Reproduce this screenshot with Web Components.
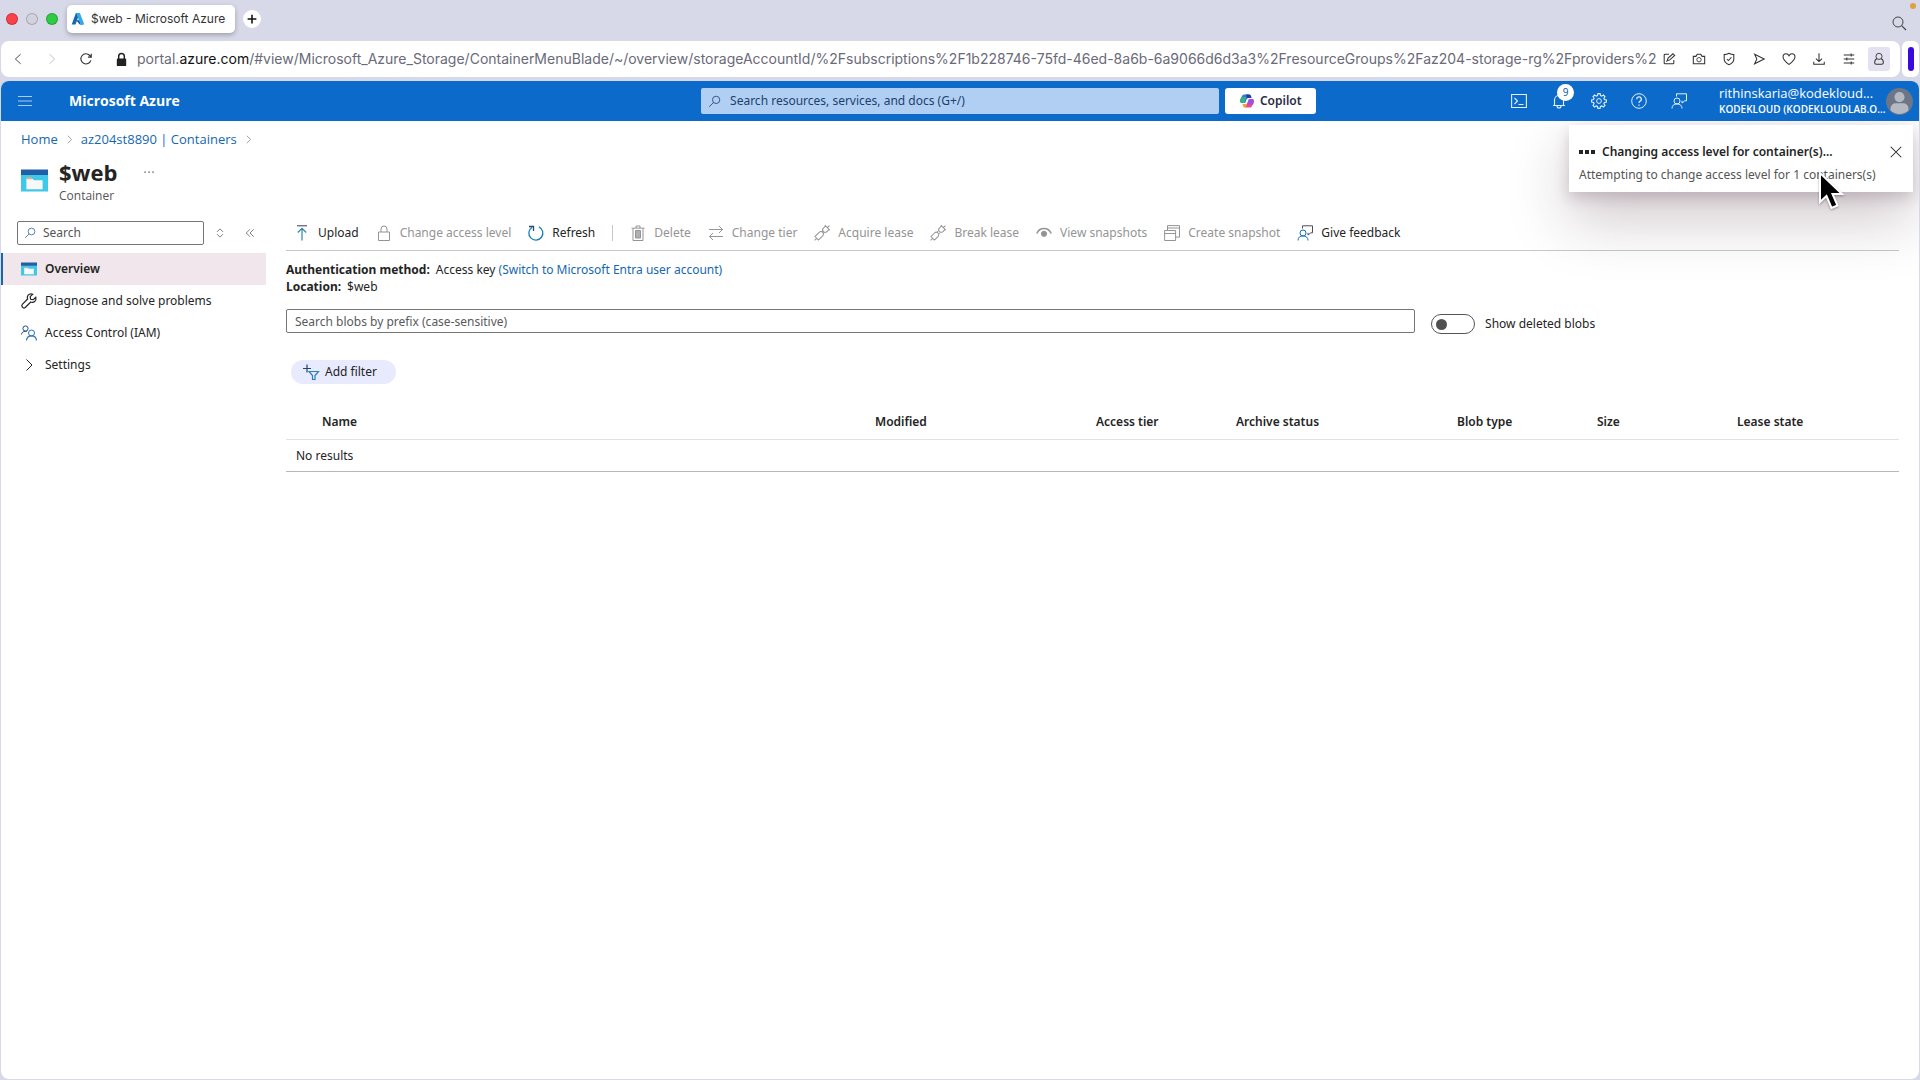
<!DOCTYPE html>
<html lang="en">
<head>
<meta charset="utf-8">
<title>$web - Microsoft Azure</title>
<style>
html, body { height: 100%; }
body { margin: 0; background: #d8d9e8; color: #242424; font: 12px/16px "Noto Sans", "Open Sans", sans-serif; overflow: hidden; }
</style>
</head>
<body>
<browser-window>
  <tab-strip slot="tabs">$web - Microsoft Azure</tab-strip>
  <address-bar slot="address"></address-bar>
  <azure-header></azure-header>
  <container-blade></container-blade>
  <toast-message heading="Changing access level for container(s)...">Attempting to change access level for 1 containers(s)</toast-message>
</browser-window>
<mouse-pointer></mouse-pointer>

<script>
const define = (name, html, setup) => {
  const template = document.createElement('template');
  template.innerHTML = html;
  customElements.define(name, class extends HTMLElement {
    constructor() {
      super();
      this.attachShadow({ mode: 'open' }).append(template.content.cloneNode(true));
    }
    connectedCallback() { if (setup) setup(this, this.shadowRoot); }
  });
};

const reset = `
  :host, *, *::before { box-sizing: border-box; }
  button, input { font: inherit; color: inherit; margin: 0; padding: 0; border: 0; background: none; }
  button { display: inline-flex; align-items: center; justify-content: center; }
  a { color: #1567b0; text-decoration: none; }
`;

const person = (c) => `<g stroke="${c}"><circle cx="6" cy="8" r="3"/><path d="M1 15.500c0-3 2-4.600 5-4.600s5 1.600 5 4.600"/></g>`;
const plug = (gap) => `
  <g transform="rotate(45 8 8)">
    <path d="M8 -2.500v3M5.500 .5h5v3a2.500 2.500 0 0 1-5 0zM4.500 .5h7M8 18.500v-3M5.500 ${9 + gap}.500a2.500 2.500 0 0 1 5 0V15.500h-5zM6.800 ${6 + gap}v1.500M9.200 ${6 + gap}v1.500"/>
  </g>`;
const icons = {
  azure: `<g stroke="none"><path fill="#1267b0" d="M5.600 1h4.200L5.200 14.200H.8z"/><path fill="#0a4a8c" d="M6 9.500h6.300l1.500 4.700H10z"/><path fill="#36a9e8" d="M5.900 1h4.300l5 13.200h-4.500z"/></g>`,
  plus: `<path stroke-width="1.800" d="M8 3v10M3 8h10"/>`,
  back: `<path d="M11 2.500L5 8l6 5.500"/>`,
  forward: `<path d="M5 2.500L11 8l-6 5.500"/>`,
  reload: `<path stroke-width="1.300" d="M13.500 9.500A5.800 5.800 0 1 1 12.300 4L14 5.800M14 2v3.800h-3.800"/>`,
  padlock: `<rect x="3" y="7" width="10" height="8" rx="1" fill="currentColor" stroke="none"/><path stroke-width="1.600" d="M5 7.500V4.500a3 3 0 0 1 6 0v3"/>`,
  edit: `<path stroke-width="1.200" d="M8 2.500H3.500a1 1 0 0 0-1 1v9a1 1 0 0 0 1 1h9a1 1 0 0 0 1-1V9M6 10l1-3 5.500-5 2 2L9 9zM5 11l2-2"/>`,
  camera: `<path stroke-width="1.200" d="M1.500 5h3L6 2.500h4L11.500 5h3v8.500h-13z"/><circle cx="8" cy="8.800" r="2.500"/>`,
  shield: `<path stroke-width="1.200" d="M8 1.500c2 1.300 3.800 1.500 5.500 1.500v5c0 3.500-3 5.500-5.500 6.500-2.500-1-5.500-3-5.500-6.500V3C4.200 3 6 2.800 8 1.500zM5.500 8l1.800 1.800L10.800 6"/>`,
  send: `<path stroke-width="1.200" d="M3 2.500L14 8 3 13.500 5.500 8z"/>`,
  heart: `<path stroke-width="1.200" d="M8 14.200C4.500 11.500 1.200 9 1.200 5.600 1.200 3.300 2.800 2 4.600 2 6.200 2 7.400 3 8 4.300 8.600 3 9.800 2 11.400 2c1.800 0 3.400 1.300 3.400 3.600 0 3.400-3.300 5.900-6.800 8.600z"/>`,
  download: `<path stroke-width="1.200" d="M8 1.500v9M4.500 7.500L8 11l3.500-3.500M2 11v3h12v-3"/>`,
  sliders: `<path stroke-width="1.200" d="M2 3.500h12M2 8h12M2 12.500h12M10.500 1.800v3.400M5.500 6.300v3.400M10.500 10.800v3.400"/>`,
  user: `<circle cx="8" cy="5" r="3.500"/><path stroke-width="1.200" d="M5.500 7.500C3.800 8.500 3 10 3 12c0 1.500 1 2 2 2h6c1 0 2-.5 2-2 0-2-.8-3.500-2.500-4.500"/>`,
  find: `<circle cx="7" cy="7" r="5"/><path stroke-width="1.200" d="M10.600 10.600L15 15"/>`,
  menu: `<path d="M1 3.500h14M1 8h14M1 12.500h14"/>`,
  search: `<circle cx="10" cy="6" r="4.500"/><path d="M6.800 9.200L1.500 14.500"/>`,
  copilot: `<g stroke="none"><path fill="#2c7de0" d="M5 1.500h5.500L8.800 4 7 10H3.500C1 10 .7 8 1.500 6L3 3Q3.600 1.500 5 1.500z"/><path fill="#38b37e" d="M1.500 6Q2 4 5 4h2L5.500 10H3.500C1 10 .7 8 1.500 6z"/><path fill="#243f9c" d="M7 1.500h3.500q1.200 0 1.600 1.500L12.500 5H10Q8.500 5 8 6z"/><path fill="#e74c8b" d="M11 14.500H5.500L7.200 12 9 6h3.500c2.500 0 2.800 2 2 4L13 13q-.6 1.500-2 1.500z"/><path fill="#a34ee0" d="M10 6h2.500c2.500 0 2.800 2 2 4l-.6 1.500H8z"/><path fill="#f7a13a" d="M3.500 11H8l-1 2.500q-.5 1-1.500 1-1 0-1.300-1z"/><path fill="#fff" d="M8 5.500h2L8 10.500H6z"/></g>`,
  shell: `<path stroke-width="1.100" d="M.600 1.500h14.800v13H.600zM3.500 5l3 3-3 3M7.500 11.500h5"/>`,
  bell: `<path stroke-width="1.100" d="M3.500 12.500V7a4.500 4.500 0 0 1 9 0v5.500l1.500 0H2zM6 13a2 2 0 0 0 4 0"/>`,
  gear: `<circle cx="8" cy="8" r="2.400"/><path stroke-width="1.100" d="M6.900.6h2.200l.4 2 1.200.5L12.400 2 14 3.600l-1.100 1.700.5 1.200 2 .4v2.200l-2 .4-.5 1.200 1.100 1.700-1.600 1.600-1.700-1.100-1.200.5-.4 2H6.900l-.4-2-1.200-.5L3.600 14 2 12.400l1.100-1.700-.5-1.200-2-.4V6.900l2-.4.500-1.200L2 3.600 3.600 2l1.700 1.100 1.200-.5z"/>`,
  help: `<circle cx="8" cy="8" r="7.300"/><path stroke-width="1.300" d="M5.700 6.200A2.300 2.300 0 1 1 9 8.200Q8 8.800 8 10M8 11.400v1.300"/>`,
  feedback: `${person('currentColor')}<path d="M5.500 3.500V.8h10v7h-1.700L11 10V7.800"/>`,
  feedbackColor: `${person('#1272b8')}<path stroke="#53485a" d="M5.500 3.500V.8h10v7h-1.700L11 10V7.800"/>`,
  avatar: `<g stroke="none"><circle cx="8" cy="8" r="8" fill="#6d7686"/><circle cx="8" cy="5.400" r="3" fill="#b5b9c2"/><path fill="#b5b9c2" d="M2.700 13.400V12a3 3 0 0 1 3-3h4.600a3 3 0 0 1 3 3v1.400A8 8 0 0 1 2.700 13.400z"/></g>`,
  container: `<g stroke="none"><path fill="#40c8e8" d="M0 4.500h16V14.500H0z"/><path fill="#1f5fa8" d="M0 1.500h16v3.300H0z"/><path fill="#f8f8f8" d="M3.200 7h3.600l1 .8h5v5.400H3.200z"/><path fill="#d9b08a" d="M3.200 6h3.500v1.300H3.200z"/></g>`,
  chevron: `<path d="M5.500 2.500L11 8l-5.500 5.500"/>`,
  sort: `<path d="M4 6.500L8 2.500l4 4M4 9.500l4 4 4-4"/>`,
  collapse: `<path d="M8 3L3 8l5 5M13 3L8 8l5 5"/>`,
  wrench: `<path stroke-width="1.200" d="M14.800 4.300L12.300 6.700 9.600 6.300 9.200 3.600 11.700 1.200C9.500.4 7 1.500 6.400 3.700 6.200 4.600 6.300 5.300 6.600 6L1.300 11.400c-1.600 1.600.9 4.800 2.900 3.100L9.800 9c2.700 1.100 6-1 5-4.700z"/>`,
  people: `<g stroke="#1c4f8a"><circle cx="4.500" cy="3.500" r="2.600"/><path d="M.6 9.500C.6 7.500 2 6.300 4.500 6.300q1 0 1.500.3"/></g><g stroke="#2a74b8"><circle cx="10.500" cy="8" r="3"/><path stroke-width="1.200" d="M5.500 15.500q.4-4.600 5-4.600t5 4.600"/></g>`,
  upload: `<path stroke="#3a3a52" d="M3 .8h10"/><path stroke="#2f86a8" stroke-width="1.200" d="M8 15.500V3.500M3.800 7.500L8 3.300l4.200 4.200"/>`,
  lock: `<path d="M2.500 7h11v8.500h-11zM5 7V4a3 3 0 0 1 6 0v3"/>`,
  refresh: `<path stroke="#1c7fae" stroke-width="1.300" d="M11 1.800A7 7 0 1 1 4 2.200"/><path stroke="#234a78" stroke-width="1.300" d="M1 1.500h4.500V6"/>`,
  trash: `<path d="M3 3.500V15.500h10V3.500M1.500 3.200h13M6 3V1h4v2"/><path fill="#b0b0b0" d="M5.500 5.500h5v7.500h-5z"/>`,
  swap: `<path d="M1 4.500h13.500M11 1l3.500 3.500L11 8M15 11.500H1.500M5 8l-3.500 3.500L5 15"/>`,
  acquire: plug(0),
  breaklease: plug(1),
  eye: `<path stroke-width="1.600" d="M.8 8.500Q3 3.500 8 3.500t7.200 5"/><circle cx="8" cy="8.800" r="2.600" fill="currentColor"/>`,
  windows: `<path d="M.6 5.500h11v10H.6zM.6 8.500h11M3.500 5.500V.6h12v11.500h-4M3.500 3h12"/>`,
  filter: `<path stroke="#23496f" stroke-width="1.200" d="M4 .5v8M0 4.500h8"/><path stroke="#2c7fb8" stroke-width="1.200" d="M6 7.500h9.500L12 11.500v4H9.500v-4z"/>`,
  progress: `<path fill="currentColor" stroke="none" d="M0 6h4v4H0zM6 6h4v4H6zM12 6h4v4h-4z"/>`,
  close: `<path stroke-width="1.200" d="M2 2l12 12M14 2L2 14"/>`,
  more: `<path fill="currentColor" stroke="none" d="M2 7.400h1.500v1.500H2zM7.300 7.400h1.500v1.500H7.300zM12.600 7.400h1.500v1.500h-1.500z"/>`
};

define('az-icon', `<style>
  :host { display: inline-block; flex: none; width: var(--size, 16px); height: var(--size, 16px); }
  svg { display: block; width: 100%; height: 100%; overflow: visible; fill: none; stroke: currentColor; stroke-width: 1; }
</style><svg viewBox="0 0 16 16" aria-hidden="true"></svg>`, (el, root) => {
  root.querySelector('svg').innerHTML = icons[el.getAttribute('name')] || '';
});

define('browser-window', `<style>${reset}
  :host { display: flex; flex-direction: column; height: 100vh; }
  main { flex: 1; min-height: 0; display: flex; flex-direction: column; position: relative; overflow: hidden;
    margin: 4px 1px 1px; border-radius: 8px; background: #fff; }
</style><slot name="tabs"></slot><slot name="address"></slot><main><slot></slot></main>`);

define('tab-strip', `<style>${reset}
  :host { display: flex; align-items: center; height: 41px; padding: 0 13px 3px 6px; font: 12px/16px Inter, sans-serif; color: #333; }
  .lights { display: flex; gap: 8px; margin-right: 9px; }
  .lights button { width: 12px; height: 12px; border-radius: 50%; border: 1px solid #0003; background: var(--c); }
  .tab { display: flex; align-items: center; gap: 6px; height: 28px; width: 168px; padding: 0 4px; border-radius: 5px; background: #fff; box-shadow: 0 2px 5px #0004; white-space: nowrap; --size: 14px; }
  .add { width: 18px; height: 18px; margin-left: 8px; border-radius: 50%; background: #fff; color: #111; --size: 14px; }
  .find { margin: 8px 0 0 auto; color: #444; position: relative; }
  .find::before { content: ""; position: absolute; right: -9px; top: -12px; width: 6px; height: 6px; border-radius: 50%; background: #e0a040; }
</style>
<div class="lights"><button aria-label="Close" style="--c:#fb4149"></button><button aria-label="Minimize" style="--c:#d2d2dd"></button><button aria-label="Zoom" style="--c:#2fcb42"></button></div>
<div class="tab"><az-icon name="azure"></az-icon><slot></slot></div>
<button class="add" aria-label="New tab"><az-icon name="plus"></az-icon></button>
<button class="find" aria-label="Search tabs"><az-icon name="find"></az-icon></button>`);

define('address-bar', `<style>${reset}
  :host { display: flex; gap: 2px; height: 36px; padding: 0 1px; color: #333; }
  .bar { flex: 1; min-width: 0; display: flex; align-items: center; padding: 0 13px 0 9px; background: #fff; border-radius: 8px; }
  nav { display: flex; gap: 18px; --size: 14px; }
  nav button { width: 16px; height: 24px; }
  nav button[disabled] { color: #bbb; }
  .lock { margin: 0 8px 0 20px; --size: 15px; color: #222; }
  .url { flex: 1; min-width: 0; overflow: hidden; white-space: nowrap; font: 14px/20px Inter, sans-serif; color: #6a6a78; }
  .url b { font-weight: 400; color: #111; }
  .tools { display: flex; gap: 14px; --size: 14px; }
  .tools button { width: 16px; height: 18px; border-radius: 1px; }
  .tools button:last-child { background: #e4e2f1; box-shadow: 0 0 0 3px #e4e2f1; }
  .panel { width: 17px; display: flex; align-items: center; justify-content: center; background: #fff; border-radius: 6px; }
  .panel i { width: 6px; height: 24px; border-radius: 3px; background: #3a08e0; }
</style>
<div class="bar">
  <nav><button aria-label="Back"><az-icon name="back"></az-icon></button><button aria-label="Forward" disabled><az-icon name="forward"></az-icon></button><button aria-label="Reload"><az-icon name="reload"></az-icon></button></nav>
  <az-icon class="lock" name="padlock"></az-icon>
  <div class="url" role="textbox" contenteditable="true" spellcheck="false" aria-label="Address">portal.<b>azure.com</b>/#view/Microsoft_Azure_Storage/ContainerMenuBlade/~/overview/storageAccountId/%2Fsubscriptions%2F1b228746-75fd-46ed-8a6b-6a9066d6d3a3%2FresourceGroups%2Faz204-storage-rg%2Fproviders%2</div>
  <div class="tools">
    <button aria-label="Edit"><az-icon name="edit"></az-icon></button><button aria-label="Snapshot"><az-icon name="camera"></az-icon></button><button aria-label="Shield"><az-icon name="shield"></az-icon></button><button aria-label="Send"><az-icon name="send"></az-icon></button><button aria-label="Favourite"><az-icon name="heart"></az-icon></button><button aria-label="Downloads"><az-icon name="download"></az-icon></button><button aria-label="Setup"><az-icon name="sliders"></az-icon></button><button aria-label="Profile"><az-icon name="user"></az-icon></button>
  </div>
</div>
<div class="panel"><i></i></div>`);

define('azure-header', `<style>${reset}
  :host { display: grid; grid-template-columns: 36.5% 27% auto 1fr; align-items: center; height: 40px; flex: none; z-index: 2; background: #0c6bca; color: #fff; }
  .brand { display: flex; align-items: center; gap: 36px; padding-left: 16px; font: 700 14px/20px "Open Sans", sans-serif; }
  .brand a { color: #fff; }
  .brand button { color: #a8cdf2; }
  label { display: flex; align-items: center; gap: 9px; height: 26px; padding: 0 7px; border-radius: 2px; background: #b1cff2; color: #1c3f6e; --size: 13px; }
  input { flex: 1; min-width: 0; outline: 0; }
  input::placeholder { color: #1c3f6e; opacity: 1; }
  .copilot { height: 26px; margin-left: 6px; padding: 0 14px; gap: 5px; border-radius: 3px; background: #fff; color: #2b2b45; font-weight: 600; --size: 16px; }
  .end { display: flex; align-items: center; justify-content: flex-end; padding-right: 6px; }
  .tools { display: flex; gap: 16px; margin-right: 28px; color: #e2f0fd; }
  .tools button { width: 24px; height: 24px; position: relative; }
  .badge { position: absolute; left: 10px; top: -5px; width: 17px; height: 17px; border-radius: 50%; background: #fff; color: #0c5a9e; font-size: 10px; line-height: 17px; text-align: center; }
  .account { width: 160px; margin-right: 7px; text-align: left; display: block; white-space: nowrap; line-height: 16px; font-family: "Open Sans", sans-serif; }
  .account span { display: block; font-size: 13px; }
  .account small { display: block; font-size: 10px; font-weight: 600; }
  .avatar { --size: 27px; }
</style>
<div class="brand"><button aria-label="Show portal menu"><az-icon name="menu"></az-icon></button><a href="#home">Microsoft Azure</a></div>
<label><az-icon name="search"></az-icon><input type="text" aria-label="Search resources, services, and docs" placeholder="Search resources, services, and docs (G+/)"></label>
<button class="copilot"><az-icon name="copilot"></az-icon>Copilot</button>
<div class="end">
  <div class="tools">
    <button aria-label="Cloud Shell"><az-icon name="shell"></az-icon></button><button aria-label="Notifications"><az-icon name="bell"></az-icon><span class="badge">9</span></button><button aria-label="Settings"><az-icon name="gear"></az-icon></button><button aria-label="Help"><az-icon name="help"></az-icon></button><button aria-label="Feedback"><az-icon name="feedback"></az-icon></button>
  </div>
  <button class="account"><span>rithinskaria@kodekloud...</span><small>KODEKLOUD (KODEKLOUDLAB.O...</small></button>
  <az-icon class="avatar" name="avatar"></az-icon>
</div>`);

define('bread-crumbs', `<style>${reset}
  :host { display: block; font: 13px/20px "Open Sans", sans-serif; }
  nav { display: flex; align-items: center; gap: 6px; color: #777; --size: 11px; }
</style><nav aria-label="Breadcrumb"><a href="#home">Home</a><az-icon name="chevron"></az-icon><a href="#containers">az204st8890 | Containers</a><az-icon name="chevron"></az-icon></nav>`);

define('blade-title', `<style>${reset}
  :host { display: flex; align-items: center; gap: 11px; font-family: "Open Sans", sans-serif; }
  .mark { --size: 27px; }
  h1 { display: flex; align-items: center; gap: 26px; margin: 0; font-size: 22px; line-height: 32px; font-weight: 700; --size: 12px; }
  p { margin: 0; line-height: 16px; color: #555; }
</style><az-icon class="mark" name="container"></az-icon><div><h1><slot></slot><button aria-label="More"><az-icon name="more"></az-icon></button></h1><p>Container</p></div>`);

define('nav-item', `<style>${reset}
  :host { display: block; }
  a { display: flex; align-items: center; gap: 8px; height: 32px; padding-left: 20px; color: #242424; }
  :host([current]) a { background: #f0e6eb; border-left: 2px solid #1a66a8; padding-left: 18px; font-weight: 600; }
</style><a href="#"><slot name="icon"></slot><slot></slot></a>`);

define('side-nav', `<style>${reset}
  :host { display: block; width: 265px; flex: none; }
  .top { display: flex; align-items: center; padding: 0 7px 8px 16px; color: #555; --size: 12px; }
  label { display: flex; align-items: center; gap: 7px; width: 187px; height: 24px; padding: 0 6px; border: 1px solid #767676; border-radius: 2px; color: #2a5f95; }
  input { width: 100%; min-width: 0; outline: 0; }
  input::placeholder { color: #555; opacity: 1; }
  .sort { margin-left: 10px; --size: 12px; }
  .fold { margin-left: 18px; }
  .sort, .fold { width: 12px; }
  az-icon[slot] { --size: 16px; }
</style>
<div class="top"><label><az-icon name="search"></az-icon><input type="text" placeholder="Search" aria-label="Search menu"></label>
<button class="sort" aria-label="Expand all"><az-icon name="sort"></az-icon></button><button class="fold" aria-label="Collapse menu"><az-icon name="collapse"></az-icon></button></div>
<nav>
<nav-item current><az-icon slot="icon" name="container"></az-icon>Overview</nav-item>
<nav-item><az-icon slot="icon" name="wrench"></az-icon>Diagnose and solve problems</nav-item>
<nav-item><az-icon slot="icon" name="people"></az-icon>Access Control (IAM)</nav-item>
<nav-item><az-icon slot="icon" name="chevron"></az-icon>Settings</nav-item>
</nav>`);

define('command-button', `<style>${reset}
  :host { display: block; }
  button { gap: 8px; height: 24px; white-space: nowrap; }
  button:disabled { color: #949494; }
</style><button><az-icon></az-icon><slot></slot></button>`, (el, root) => {
  root.querySelector('button').disabled = el.hasAttribute('disabled');
  const icon = document.createElement('az-icon');
  icon.setAttribute('name', el.getAttribute('icon'));
  root.querySelector('az-icon').replaceWith(icon);
});

define('command-bar', `<style>${reset}
  :host { display: flex; align-items: center; gap: 17px; height: 30px; padding: 0 8px 5px; border-bottom: 1px solid #c8c8c8; }
  hr { width: 1px; height: 16px; margin: 0; border: 0; background: #c8c8c8; }
</style>
<command-button icon="upload">Upload</command-button>
<command-button icon="lock" disabled>Change access level</command-button>
<command-button icon="refresh">Refresh</command-button>
<hr>
<command-button icon="trash" disabled>Delete</command-button>
<command-button icon="swap" disabled>Change tier</command-button>
<command-button icon="acquire" disabled>Acquire lease</command-button>
<command-button icon="breaklease" disabled>Break lease</command-button>
<command-button icon="eye" disabled>View snapshots</command-button>
<command-button icon="windows" disabled>Create snapshot</command-button>
<command-button icon="feedbackColor">Give feedback</command-button>`);

define('toggle-switch', `<style>${reset}
  :host { display: block; }
  label { display: flex; align-items: center; gap: 10px; }
  input { appearance: none; display: flex; align-items: center; width: 44px; height: 20px; padding: 0 4px; border: 1px solid #555; border-radius: 10px; }
  input::before { content: ""; width: 11px; height: 11px; border-radius: 50%; background: #505050; }
</style><label><input type="checkbox" role="switch"><slot></slot></label>`);

define('blob-table', `<style>${reset}
  :host { display: block; }
  table { width: 100%; table-layout: fixed; border-collapse: collapse; }
  th { height: 34px; padding: 0 8px; text-align: left; font-weight: 600; border-bottom: 1px solid #e2e2e2; }
  th:first-child { padding-left: 36px; }
  td { height: 32px; padding: 2px 10px 0; border-bottom: 1px solid #b8b8b8; }
  .narrow { width: 140px; }
  .wide { width: 221px; }
  .last { width: 170px; }
</style>
<table><colgroup><col><col class="wide"><col class="narrow"><col class="wide"><col class="narrow"><col class="narrow"><col class="last"></colgroup>
<thead><tr><th>Name</th><th>Modified</th><th>Access tier</th><th>Archive status</th><th>Blob type</th><th>Size</th><th>Lease state</th></tr></thead>
<tbody><tr><td colspan="7">No results</td></tr></tbody></table>`);

define('blob-list', `<style>${reset}
  :host { display: block; flex: 1; min-width: 0; padding: 0 20px; }
  p { margin: 0; line-height: 17px; }
  .info { padding: 10px 0 13px; }
  p b { margin-right: 6px; }
  .search { display: flex; align-items: center; gap: 16px; }
  .search input { width: 70%; height: 24px; padding: 0 8px; border: 1px solid #767676; border-radius: 2px; }
  input::placeholder { color: #5a5a5a; opacity: 1; }
  toggle-switch { padding-top: 6px; }
  .filter { margin: 26px 0 21px 5px; height: 24px; padding: 0 19px 0 12px; gap: 6px; border-radius: 12px; background: #e8ebfd; }
</style>
<command-bar></command-bar>
<div class="info"><p><b>Authentication method:</b>Access key <a href="#switch">(Switch to Microsoft Entra user account)</a></p><p><b>Location:</b>$web</p></div>
<div class="search"><input type="text" aria-label="Search blobs by prefix" placeholder="Search blobs by prefix (case-sensitive)"><toggle-switch>Show deleted blobs</toggle-switch></div>
<button class="filter"><az-icon name="filter"></az-icon>Add filter</button>
<blob-table></blob-table>`);

define('container-blade', `<style>${reset}
  :host { display: block; flex: 1; min-height: 0; }
  header { padding: 8px 20px 0; }
  blade-title { margin-top: 7px; }
  .body { display: flex; padding-top: 17px; }
</style>
<header><bread-crumbs></bread-crumbs><blade-title>$web</blade-title></header>
<div class="body"><side-nav></side-nav><blob-list></blob-list></div>`);

define('toast-message', `<style>${reset}
  :host { position: absolute; z-index: 1; top: 44px; right: 6px; width: 344px; height: 67px; padding: 17px 10px 0; background: #fff; box-shadow: 0 6px 14px #3a203033, 0 26px 60px #40203040; white-space: nowrap; }
  .head { display: flex; align-items: center; gap: 7px; line-height: 20px; font-weight: 600; }
  button { margin-left: auto; --size: 14px; }
  p { margin: 3px 0 0; line-height: 20px; color: #555; }
</style><div class="head"><az-icon name="progress"></az-icon><span></span><button aria-label="Dismiss"><az-icon name="close"></az-icon></button></div><p><slot></slot></p>`, (el, root) => {
  root.querySelector('span').textContent = el.getAttribute('heading');
});

define('mouse-pointer', `<style>
  :host { position: absolute; z-index: 9; left: 94.7%; top: 171px; width: 27px; height: 40px; pointer-events: none; filter: drop-shadow(0 1px 1px #0005); }
</style><svg width="27" height="40" viewBox="0 0 27 40"><path d="M2 2v29l6.500-6 5 12 6-2.500-5-11.500H24z" fill="#000" stroke="#fff" stroke-width="2"/></svg>`);
</script>
</body>
</html>
